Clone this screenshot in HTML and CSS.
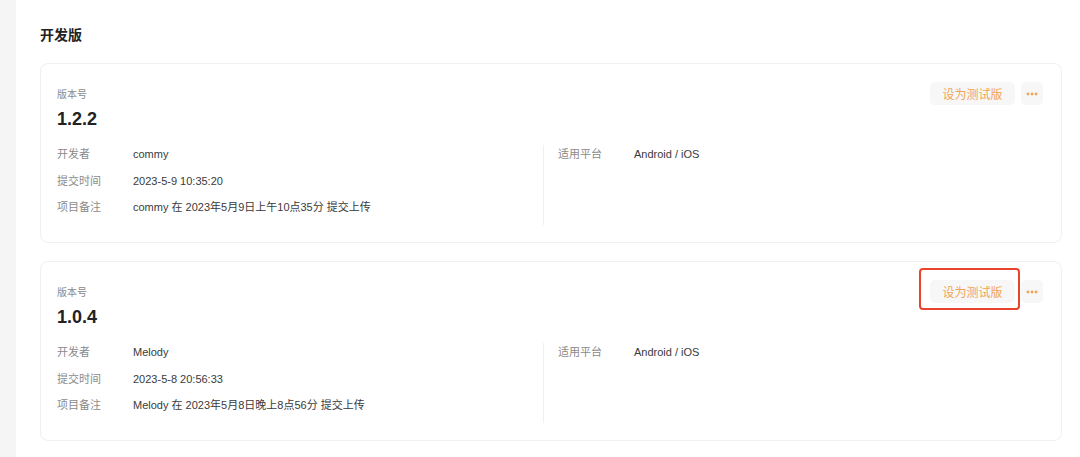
FILE: index.html
```html
<!DOCTYPE html>
<html lang="zh">
<head>
<meta charset="utf-8">
<link rel="stylesheet" href="styles.css">
</head>
<body>
<div class="layout">
  <aside class="side"></aside>
  <main class="main">
    <h2 class="title">开发版</h2>
    <section class="card">
      <div class="head">
        <div class="ver">
          <div class="ver-label">版本号</div>
          <div class="ver-num">1.2.2</div>
        </div>
        <div class="actions">
          <button class="btn">设为测试版</button>
          <button class="more"><svg width="12" height="4" viewBox="0 0 12 4"><circle cx="2" cy="2" r="1.4"/><circle cx="6" cy="2" r="1.4"/><circle cx="10" cy="2" r="1.4"/></svg></button>
        </div>
      </div>
      <div class="details">
        <div class="col">
          <div class="row"><span class="k">开发者</span><span class="v">commy</span></div>
          <div class="row"><span class="k">提交时间</span><span class="v">2023-5-9 10:35:20</span></div>
          <div class="row"><span class="k">项目备注</span><span class="v">commy 在 2023年5月9日上午10点35分 提交上传</span></div>
        </div>
        <div class="col col-right">
          <div class="row"><span class="k">适用平台</span><span class="v">Android / iOS</span></div>
        </div>
      </div>
    </section>
    <section class="card">
      <div class="head">
        <div class="ver">
          <div class="ver-label">版本号</div>
          <div class="ver-num">1.0.4</div>
        </div>
        <div class="actions">
          <button class="btn">设为测试版</button>
          <button class="more"><svg width="12" height="4" viewBox="0 0 12 4"><circle cx="2" cy="2" r="1.4"/><circle cx="6" cy="2" r="1.4"/><circle cx="10" cy="2" r="1.4"/></svg></button>
          <div class="highlight"></div>
        </div>
      </div>
      <div class="details">
        <div class="col">
          <div class="row"><span class="k">开发者</span><span class="v">Melody</span></div>
          <div class="row"><span class="k">提交时间</span><span class="v">2023-5-8 20:56:33</span></div>
          <div class="row"><span class="k">项目备注</span><span class="v">Melody 在 2023年5月8日晚上8点56分 提交上传</span></div>
        </div>
        <div class="col col-right">
          <div class="row"><span class="k">适用平台</span><span class="v">Android / iOS</span></div>
        </div>
      </div>
    </section>
  </main>
</div>
</body>
</html>
```
FILE: styles.css
```css
* { box-sizing: border-box; }
html, body { margin: 0; padding: 0; background: #fff; }
body {
  font-family: "Liberation Sans", "Noto Sans CJK SC", sans-serif;
  color: #333;
  height: 457px;
  overflow: hidden;
}
.layout { display: flex; min-height: 457px; }
.side { width: 16px; flex: none; background: #f5f5f5; }
.main { flex: 1; padding: 25px 18px 0 24px; }
.title {
  margin: 0 0 18px;
  font-size: 14px;
  line-height: 20px;
  font-weight: bold;
  color: #222;
}
.card {
  border: 1px solid #f0f0f0;
  border-radius: 8px;
  height: 180px;
  padding: 18px 18px 0 16px;
  margin-bottom: 18px;
}
.head { display: flex; justify-content: space-between; align-items: flex-start; }
.ver-label { margin-top: 6px; font-size: 10px; line-height: 14px; color: #8a8a8a; }
.ver-num { margin-top: 5px; font-size: 18px; line-height: 24px; font-weight: bold; color: #222; }
.actions { position: relative; display: flex; gap: 6px; }
.btn {
  border: none;
  background: #f7f7f7;
  border-radius: 5px;
  height: 23px;
  width: 85px;
  padding: 0;
  font-family: inherit;
  font-size: 12px;
  color: #f2a452;
}
.more {
  border: none;
  background: #f7f7f7;
  border-radius: 5px;
  height: 23px;
  width: 22px;
  padding: 0;
  display: flex;
  align-items: center;
  justify-content: center;
}
.more svg { fill: #f2a452; }
.highlight {
  position: absolute;
  left: -11px;
  top: -12px;
  width: 101px;
  height: 42px;
  border: 2px solid #e8432d;
  border-radius: 4px;
}
.details { display: flex; margin-top: 14px; }
.col { width: 486px; display: flex; flex-direction: column; gap: 8.5px; }
.col-right { flex: 1; border-left: 1px solid #f0f0f0; padding-left: 14px; height: 80px; }
.row { display: flex; font-size: 11px; line-height: 18px; }
.k { width: 76px; flex: none; color: #8a8a8a; }
.v { color: #3a3a3a; }
```
